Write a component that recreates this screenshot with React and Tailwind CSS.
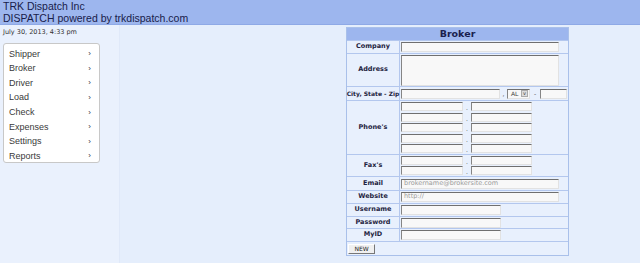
import React from "react";

const inputCls =
  "bg-[#f8f8f8] border-t border-l border-t-[#6f6f6f] border-l-[#858585] border-r border-b border-r-[#e2e2e2] border-b-[#e2e2e2]";

function Inp({ w, h = "h-[10px]", ph }) {
  return (
    <div className={`${inputCls} ${w} ${h} flex items-center px-[2px] text-[6.5px] text-[#9a9a9a]`}>
      {ph}
    </div>
  );
}

function Row({ label, h, children, align = "items-center", small = false }) {
  return (
    <div className={`flex border-t border-[#b3c7ee] ${h}`}>
      <div className={`w-[53px] shrink-0 flex items-center justify-center border-r border-[#b3c7ee] bg-[#e8f0fd] ${small ? "text-[6px]" : "text-[6.5px]"} font-bold text-[#1e2340] whitespace-nowrap`}>
        {label}
      </div>
      <div className={`flex-1 flex ${align} pl-[1px] bg-[#e8f0fd]`}>{children}</div>
    </div>
  );
}

function PhoneLine() {
  return (
    <div className="flex items-end">
      <Inp w="w-[62px]" h="h-[9px]" />
      <span className="w-[8px] text-center text-[6px] leading-[6px] text-[#444]">.</span>
      <Inp w="w-[61px]" h="h-[9px]" />
    </div>
  );
}

export default function App() {
  const menu = ["Shipper", "Broker", "Driver", "Load", "Check", "Expenses", "Settings", "Reports"];
  return (
    <div className="w-[640px] h-[263px] overflow-hidden bg-[#e5eefc] flex flex-col" style={{ fontFamily: "'DejaVu Sans', Verdana, sans-serif" }}>
      <div className="h-[25px] bg-[#9db6ee] pl-[3px] text-[10.5px] leading-[12px] text-[#18204a] border-b border-[#8ea9e6]" style={{ fontFamily: "'Liberation Sans', Arial, sans-serif" }}>
        <div>TRK Dispatch Inc</div>
        <div>DISPATCH powered by trkdispatch.com</div>
      </div>
      <div className="flex flex-1">
        <div className="w-[120px] bg-[#eaf1fd] border-r border-[#e0e9f9] pt-[3px]">
          <div className="pl-[3px] text-[6.5px] leading-[9px] text-[#333]">July 30, 2013, 4:33 pm</div>
          <div className="ml-[3px] mt-[6px] w-[97px] h-[120px] bg-white border border-[#c8c8c8] rounded-[3px] pt-[3px] text-[#3a3a3a]" style={{ fontFamily: "'Liberation Sans', Arial, sans-serif" }}>
            {menu.map((m) => (
              <div key={m} className="h-[14.6px] flex items-center justify-between pl-[5px] pr-[8px] text-[9px]">
                <span>{m}</span>
                <span className="text-[8px]">›</span>
              </div>
            ))}
          </div>
        </div>
        <div className="flex-1 pl-[226px] pt-[2px]">
          <div className="w-[223px] border border-[#a9c0ea] bg-[#e8f0fd]">
            <div className="h-[12px] bg-[#9db6ee] flex items-center justify-center text-[9.5px] font-bold text-[#1a1f4e]">Broker</div>
            <Row label="Company" h="h-[13px]">
              <Inp w="w-[158px]" />
            </Row>
            <Row label="Address" h="h-[33px]">
              <Inp w="w-[158px]" h="h-[31px]" />
            </Row>
            <Row label="City, State - Zip" h="h-[14px]" small>
              <Inp w="w-[99px]" />
              <span className="w-[7px] text-center text-[6px] text-[#444]">,</span>
              <div className={`${inputCls} w-[23px] h-[10px] flex items-center justify-between pl-[3px] pr-[1px] text-[6px] text-[#444]`}>
                <span>AL</span>
                <span className="w-[7px] h-[7px] bg-[#dcdcdc] border border-[#aaa] flex items-center justify-center text-[5px] leading-none">v</span>
              </div>
              <span className="w-[10px] text-center text-[6px] text-[#444]">-</span>
              <Inp w="w-[27px]" />
            </Row>
            <Row label="Phone's" h="h-[54px]">
              <div className="flex flex-col gap-[1.5px]">
                <PhoneLine />
                <PhoneLine />
                <PhoneLine />
                <PhoneLine />
                <PhoneLine />
              </div>
            </Row>
            <Row label="Fax's" h="h-[22px]">
              <div className="flex flex-col gap-[1.5px]">
                <PhoneLine />
                <PhoneLine />
              </div>
            </Row>
            <Row label="Email" h="h-[14px]">
              <Inp w="w-[158px]" ph="brokername@brokersite.com" />
            </Row>
            <Row label="Website" h="h-[13px]">
              <Inp w="w-[158px]" ph="http://" />
            </Row>
            <Row label="Username" h="h-[13px]">
              <Inp w="w-[100px]" />
            </Row>
            <Row label="Password" h="h-[12px]">
              <Inp w="w-[100px]" />
            </Row>
            <Row label="MyID" h="h-[13px]">
              <Inp w="w-[100px]" />
            </Row>
            <div className="h-[14px] border-t border-[#b3c7ee] flex items-center pl-[1px]">
              <div className="w-[27px] h-[10px] bg-[#f0f0f0] border border-t-white border-l-white border-r-[#777] border-b-[#777] flex items-center justify-center text-[6px] text-[#222]">
                NEW
              </div>
            </div>
          </div>
        </div>
      </div>
    </div>
  );
}
